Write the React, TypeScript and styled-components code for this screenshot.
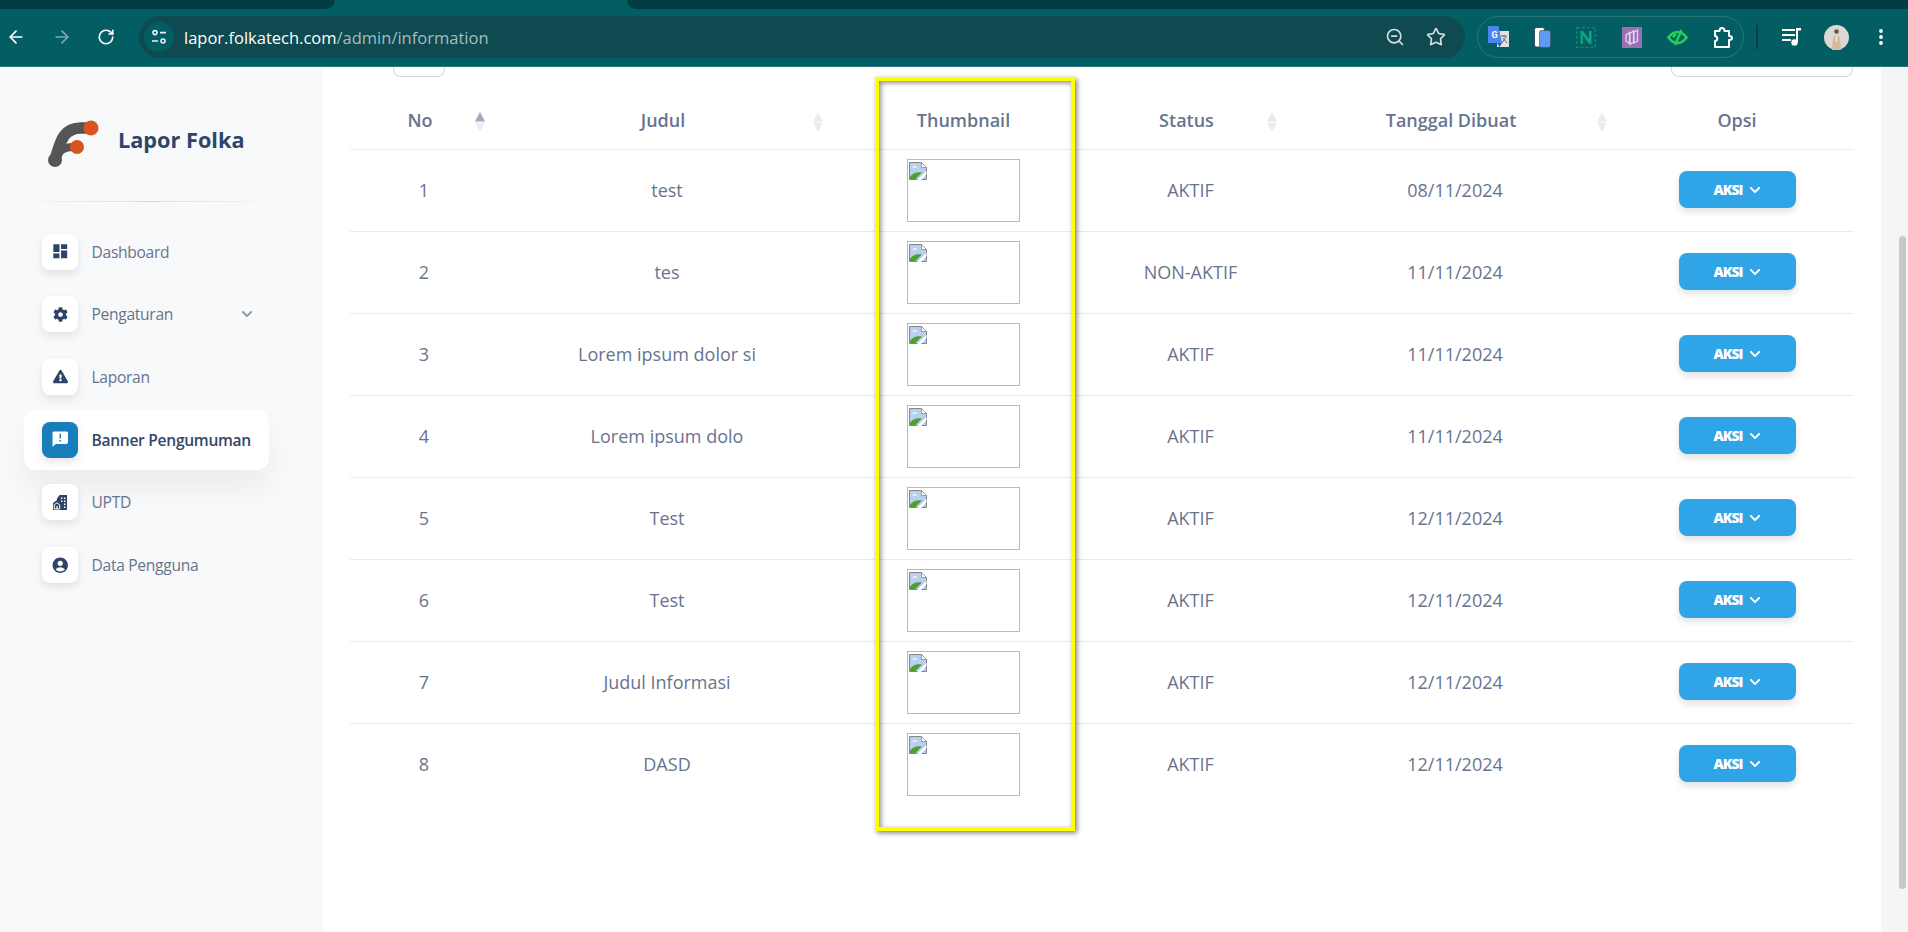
import styled, { createGlobalStyle } from 'styled-components';
import { ArrowLeft, ArrowRight, RotateCw, Star, ZoomOut } from 'lucide-react';
import { FaChevronDown, FaCog, FaExclamationTriangle } from 'react-icons/fa';
import { MdAccountCircle, MdAnnouncement, MdDashboard } from 'react-icons/md';
import type { ReactNode } from 'react';

const GlobalStyle = createGlobalStyle`
  html, body {
    margin: 0;
    padding: 0;
    height: 100%;
    overflow: hidden;
    background: #f8f9fa;
    font-family: "Open Sans", "Noto Sans", sans-serif;
  }
`;

const rows = [
  { no: 1, title: 'test', status: 'AKTIF', date: '08/11/2024' },
  { no: 2, title: 'tes', status: 'NON-AKTIF', date: '11/11/2024' },
  { no: 3, title: 'Lorem ipsum dolor si', status: 'AKTIF', date: '11/11/2024' },
  { no: 4, title: 'Lorem ipsum dolo', status: 'AKTIF', date: '11/11/2024' },
  { no: 5, title: 'Test', status: 'AKTIF', date: '12/11/2024' },
  { no: 6, title: 'Test', status: 'AKTIF', date: '12/11/2024' },
  { no: 7, title: 'Judul Informasi', status: 'AKTIF', date: '12/11/2024' },
  { no: 8, title: 'DASD', status: 'AKTIF', date: '12/11/2024' },
];

function BuildingIcon() {
  return (
    <svg width="14" height="15" viewBox="0 0 14 15">
      <path d="M4 3.500L6.500 0H14v15H0V8l4-3z" fill="currentColor" />
      <path d="M1.300 14v-4.200l2.700-2 2.700 2V14z" fill="currentColor" stroke="#fff" strokeWidth="1" />
      <path d="M3.400 11h1.300v3H3.400z" fill="#fff" />
      <path d="M8 2.500h1.400v1.400H8zM11 2.500h1.400v1.400H11zM8 5.500h1.400v1.400H8zM11 5.500h1.400v1.400H11zM11 8.500h1.400v1.400H11zM11 11.500h1.400v1.400H11z" fill="#fff" />
    </svg>
  );
}

const navItems: { label: string; icon: ReactNode; active?: boolean; caret?: boolean }[] = [
  { label: 'Dashboard', icon: <MdDashboard size={18.5} /> },
  { label: 'Pengaturan', icon: <FaCog size={15} />, caret: true },
  { label: 'Laporan', icon: <FaExclamationTriangle size={15} /> },
  { label: 'Banner Pengumuman', icon: <MdAnnouncement size={18.5} />, active: true },
  { label: 'UPTD', icon: <BuildingIcon /> },
  { label: 'Data Pengguna', icon: <MdAccountCircle size={18.5} /> },
];

function TuneIcon() {
  return (
    <svg width="16" height="16" viewBox="0 0 16 16" fill="none" stroke="#e8f3f3" strokeWidth="1.6">
      <circle cx="4" cy="3.600" r="2" />
      <path d="M9 3.600h6M1 12h6" />
      <circle cx="12" cy="12" r="2" />
    </svg>
  );
}

function TranslateIcon() {
  return (
    <svg width="21" height="22" viewBox="0 0 21 22">
      <rect x="9" y="5" width="12" height="16" fill="#dfe3e3" />
      <path d="M13 10h6M16 9v2M14 17l4-6M15 12l4 5" stroke="#666" strokeWidth="1" fill="none" />
      <path d="M0 0h10.500l3.500 17H0z" fill="#4a86ee" />
      <path d="M9 17h5l-2.500 4z" fill="#2c5fc0" />
      <GlyphG x="6.500" y="11.500" textAnchor="middle">
        G
      </GlyphG>
    </svg>
  );
}

function PhonesIcon() {
  return (
    <svg width="17" height="21" viewBox="0 0 17 21">
      <rect x="0.500" y="0.500" width="10" height="19.500" rx="2" fill="#fff" stroke="#3a4a5c" />
      <rect x="5.500" y="3.500" width="11" height="17" rx="2" fill="#5c9cf5" stroke="#3a4a5c" strokeWidth="0.600" />
    </svg>
  );
}

function NotionIcon() {
  return (
    <svg width="20" height="21" viewBox="0 0 20 21">
      <rect x="0.700" y="0.700" width="18.600" height="19.600" fill="none" stroke="#0d8a77" strokeWidth="1.300" strokeDasharray="3 2" />
      <path d="M4.500 17V4h2.600l5.900 8V4H15.500v13h-2.400L7 8.500V17z" fill="#10a27f" />
    </svg>
  );
}

function StackIcon() {
  return (
    <svg width="20" height="21" viewBox="0 0 20 21">
      <rect width="20" height="21" fill="#9a6fb4" />
      <path d="M4 8l3.500-2.500v11L4 14zM8 6.500l3.500-2.500v11L8 17.500zM12 5l3.500-2v11L12 16z" fill="none" stroke="#e5d6ee" strokeWidth="1.300" />
    </svg>
  );
}

function EyeOffIcon() {
  return (
    <svg width="21" height="17" viewBox="0 0 21 17" fill="none" stroke="#27cc5e" strokeWidth="2.600">
      <path d="M1.500 8.500c2.500-3.500 5.500-5.500 9-5.500s6.500 2 9 5.500c-2.500 3.500-5.500 5.500-9 5.500s-6.500-2-9-5.500z" />
      <path d="M14.500 1L8 16" />
      <path d="M6.500 8.500c0-2 1.500-3 3-3" />
    </svg>
  );
}

function PuzzleIcon() {
  return (
    <svg width="21" height="23" viewBox="0 0 21 23" fill="none" stroke="#fff" strokeWidth="2" strokeLinejoin="round">
      <path d="M2 5h4.500c0-4 5-4 5 0H16v5c4 0 4 4 0 4v7H2v-6c3 0 3-5 0-5z" />
    </svg>
  );
}

function QueueIcon() {
  return (
    <svg width="20" height="20" viewBox="0 0 20 20" fill="#fff">
      <path d="M0 2h13v2H0zM0 7h13v2H0zM0 12h9v2H0z" />
      <path d="M14 1h5v2.400h-3V15h-2z" />
      <circle cx="12.500" cy="15.500" r="3.200" />
    </svg>
  );
}

function AvatarImage() {
  return (
    <svg width="25" height="25" viewBox="0 0 25 25">
      <circle cx="12.500" cy="12.500" r="12.500" fill="#dcd9d5" />
      <path d="M8 25l1-13 3.500-2 3.500 2 1 13z" fill="#d4bc9c" />
      <circle cx="12.500" cy="6.500" r="2.300" fill="#6a5142" />
      <path d="M11.800 10.500h1.400v6h-1.400z" fill="#f3ede5" />
    </svg>
  );
}

function Dots() {
  return (
    <svg width="4" height="16" viewBox="0 0 4 16" fill="#fff">
      <circle cx="2" cy="2" r="1.900" />
      <circle cx="2" cy="8" r="1.900" />
      <circle cx="2" cy="14" r="1.900" />
    </svg>
  );
}

function FolkaLogo() {
  return (
    <svg width="56" height="52" viewBox="0 0 56 52" fill="none">
      <path d="M10 42C15 26 17 10 36 10h9" stroke="#555555" strokeWidth="11.500" strokeLinecap="round" />
      <path d="M14 35c3-5 8-6 17-6" stroke="#555555" strokeWidth="8" />
      <circle cx="10" cy="42" r="7" fill="#555555" />
      <circle cx="46" cy="10" r="7.500" fill="#d9541e" />
      <circle cx="32" cy="29" r="7" fill="#d9541e" />
    </svg>
  );
}

function BrokenImageIcon() {
  return (
    <svg width="18" height="18" viewBox="0 0 18 18">
      <path d="M.5.5h12l5 5v12H.5z" fill="#b9cff0" stroke="#858585" />
      <path d="M12.500.5v5h5z" fill="#fff" stroke="#9a9a9a" />
      <path d="M3 5.500c1-1.800 4.500-1.800 5.500 0z" fill="#fff" />
      <path d="M1 17v-2C3 11 8 9.500 13 10.500L6.500 17z" fill="#4f9f2c" />
      <path d="M8 18L17.500 9v3L12 18z" fill="#fff" />
    </svg>
  );
}

function SortIcon({ active }: { active?: boolean }) {
  return (
    <SortMark width="10" height="20" viewBox="0 0 10 20">
      <path d="M5 0l5 9.500H0z" fill={active ? '#a3aabd' : '#e9ecef'} />
      <path d="M5 20L0 10.500h10z" fill="#e9ecef" />
    </SortMark>
  );
}

function App() {
  return (
    <>
      <GlobalStyle />
      <Page>
        <TabStrip>
          <TabEdge $width={335} $radius="0 0 12px 0" />
          <TabGap />
          <TabEdge $width={1281} $radius="0 0 0 12px" />
        </TabStrip>
        <Toolbar>
          <NavButtons>
            <ArrowLeft size={20} color="#ffffff" strokeWidth={2} />
            <ArrowRight size={20} color="#7ea9ac" strokeWidth={2} />
            <RotateCw size={18} color="#ffffff" strokeWidth={2.2} />
          </NavButtons>
          <AddressBar>
            <SiteInfo>
              <TuneIcon />
            </SiteInfo>
            <UrlText>
              lapor.folkatech.com<UrlPath>/admin/information</UrlPath>
            </UrlText>
            <AddressActions>
              <ZoomOut size={20} color="#d6dcdc" strokeWidth={2} />
              <Star size={20} color="#d6dcdc" strokeWidth={2} />
            </AddressActions>
          </AddressBar>
          <ExtensionPill>
            <TranslateIcon />
            <PhonesIcon />
            <NotionIcon />
            <StackIcon />
            <EyeOffIcon />
            <PuzzleIcon />
          </ExtensionPill>
          <ToolbarDivider />
          <ProfileGroup>
            <QueueIcon />
            <AvatarSlot>
              <AvatarImage />
            </AvatarSlot>
            <Dots />
          </ProfileGroup>
        </Toolbar>
        <Body>
          <Sidebar>
            <Brand>
              <FolkaLogo />
              <BrandName>Lapor Folka</BrandName>
            </Brand>
            <SideDivider />
            <NavList>
              {navItems.map((item) => (
                <NavItem key={item.label} $active={item.active}>
                  <NavIcon $active={item.active}>{item.icon}</NavIcon>
                  <NavLabel $active={item.active}>{item.label}</NavLabel>
                  {item.caret && (
                    <Caret>
                      <FaChevronDown size={12} />
                    </Caret>
                  )}
                </NavItem>
              ))}
            </NavList>
          </Sidebar>
          <Main>
            <Controls>
              <LengthBox />
              <SearchBox />
            </Controls>
            <Table>
              <colgroup>
                <Col $width={148} />
                <Col $width={338} />
                <Col $width={255} />
                <Col $width={199} />
                <Col $width={330} />
                <Col $width={234} />
              </colgroup>
              <thead>
                <tr>
                  <HeadCell $sortable>
                    No
                    <SortIcon active />
                  </HeadCell>
                  <HeadCell $sortable>
                    Judul
                    <SortIcon />
                  </HeadCell>
                  <HeadCell>Thumbnail</HeadCell>
                  <HeadCell $sortable>
                    Status
                    <SortIcon />
                  </HeadCell>
                  <HeadCell $sortable>
                    Tanggal Dibuat
                    <SortIcon />
                  </HeadCell>
                  <HeadCell>Opsi</HeadCell>
                </tr>
              </thead>
              <tbody>
                {rows.map((row) => (
                  <BodyRow key={row.no}>
                    <Cell>{row.no}</Cell>
                    <Cell>{row.title}</Cell>
                    <Cell>
                      <Thumb>
                        <BrokenImageIcon />
                      </Thumb>
                    </Cell>
                    <Cell>{row.status}</Cell>
                    <Cell>{row.date}</Cell>
                    <Cell>
                      <ActionButton>
                        AKSI
                        <FaChevronDown size={12} />
                      </ActionButton>
                    </Cell>
                  </BodyRow>
                ))}
              </tbody>
            </Table>
            <Highlight />
          </Main>
          <Gutter>
            <ScrollThumb />
          </Gutter>
        </Body>
      </Page>
    </>
  );
}

export default App;

const Page = styled.div`
  width: 1908px;
  height: 932px;
  display: flex;
  flex-direction: column;
  overflow: hidden;
`;

const TabStrip = styled.div`
  height: 9px;
  display: flex;
  background: #035e64;
`;

const TabEdge = styled.div<{ $width: number; $radius: string }>`
  width: ${(p) => p.$width}px;
  background: #023c43;
  border-radius: ${(p) => p.$radius};
`;

const TabGap = styled.div`
  flex: 1;
`;

const Toolbar = styled.div`
  height: 58px;
  box-sizing: border-box;
  display: flex;
  align-items: center;
  background: #035e64;
  border-bottom: 1px solid #2c777c;
  padding-bottom: 1px;
`;

const NavButtons = styled.div`
  width: 139px;
  box-sizing: border-box;
  padding-left: 6px;
  padding-right: 24px;
  display: flex;
  align-items: center;
  justify-content: space-between;
`;

const AddressBar = styled.div`
  width: 1326px;
  height: 42px;
  border-radius: 21px;
  background: #0e4a50;
  display: flex;
  align-items: center;
  padding-left: 5px;
  box-sizing: border-box;
`;

const SiteInfo = styled.div`
  width: 30px;
  height: 30px;
  border-radius: 50%;
  background: #035e64;
  display: flex;
  align-items: center;
  justify-content: center;
`;

const UrlText = styled.div`
  margin-left: 10px;
  color: #ffffff;
  font-size: 16.5px;
  white-space: nowrap;
`;

const UrlPath = styled.span`
  color: #a7bcbe;
`;

const AddressActions = styled.div`
  margin-left: auto;
  padding-right: 19px;
  display: flex;
  align-items: center;
  gap: 21px;
`;

const ExtensionPill = styled.div`
  margin-left: 12px;
  width: 267px;
  height: 42px;
  box-sizing: border-box;
  border: 1px solid #2a7479;
  border-radius: 21px;
  padding: 0 9px 0 10px;
  display: flex;
  align-items: center;
  justify-content: space-between;
`;

const GlyphG = styled.text`
  font-family: "Roboto", sans-serif;
  font-size: 9px;
  font-weight: 700;
  fill: #ffffff;
`;

const ToolbarDivider = styled.div`
  width: 2px;
  height: 24px;
  margin-left: 12px;
  background: #0d3d43;
`;

const ProfileGroup = styled.div`
  margin-left: 24px;
  display: flex;
  align-items: center;
`;

const AvatarSlot = styled.span`
  display: flex;
  margin: 0 30px 0 22px;
`;

const Body = styled.div`
  height: 865px;
  display: flex;
`;

const Sidebar = styled.aside`
  width: 323px;
  flex-shrink: 0;
  background: #f8f9fa;
`;

const Brand = styled.div`
  height: 134px;
  box-sizing: border-box;
  padding: 51px 0 0 45px;
  display: flex;
  align-items: flex-start;
`;

const BrandName = styled.div`
  margin: 7px 0 0 17px;
  font-size: 21.7px;
  line-height: 30px;
  font-weight: 700;
  color: #2f4568;
  white-space: nowrap;
`;

const SideDivider = styled.div`
  height: 1px;
  margin: 0 40px 0 15px;
  background: linear-gradient(90deg, rgba(0, 0, 0, 0), rgba(0, 0, 0, 0.12), rgba(0, 0, 0, 0));
`;

const NavList = styled.nav`
  padding: 19.5px 0 0 24px;
  width: 245px;
  display: flex;
  flex-direction: column;
  gap: 2.7px;
`;

const NavItem = styled.div<{ $active?: boolean }>`
  height: 60px;
  box-sizing: border-box;
  padding-left: 18px;
  display: flex;
  align-items: center;
  border-radius: 12px;
  background: ${(p) => (p.$active ? '#ffffff' : 'transparent')};
  box-shadow: ${(p) => (p.$active ? '0 20px 27px rgba(0, 0, 0, 0.05)' : 'none')};
`;

const NavIcon = styled.div<{ $active?: boolean }>`
  width: 36px;
  height: 36px;
  flex-shrink: 0;
  border-radius: 8px;
  display: flex;
  align-items: center;
  justify-content: center;
  background: ${(p) => (p.$active ? '#1a7dbb' : '#ffffff')};
  color: ${(p) => (p.$active ? '#ffffff' : '#2f4568')};
  box-shadow: 0 4px 8px rgba(20, 20, 20, 0.1);
`;

const NavLabel = styled.span<{ $active?: boolean }>`
  margin-left: 13.5px;
  font-size: 15.6px;
  letter-spacing: -0.3px;
  white-space: nowrap;
  font-weight: ${(p) => (p.$active ? 600 : 400)};
  color: ${(p) => (p.$active ? '#344767' : '#67748e')};
`;

const Caret = styled.span`
  margin-left: auto;
  margin-right: 16px;
  display: flex;
  color: #8a94ab;
`;

const Main = styled.main`
  position: relative;
  width: 1558px;
  box-sizing: border-box;
  padding: 0 27px;
  background: #ffffff;
`;

const Controls = styled.div`
  height: 10px;
  display: flex;
  justify-content: space-between;
  padding: 0 1px 0 43px;
`;

const LengthBox = styled.div`
  width: 52px;
  box-sizing: border-box;
  border: 1px solid #d2d6da;
  border-top: 0;
  border-radius: 0 0 8px 8px;
`;

const SearchBox = styled.div`
  width: 182px;
  box-sizing: border-box;
  border: 1px solid #d2d6da;
  border-top: 0;
  border-radius: 0 0 8px 8px;
`;

const Table = styled.table`
  width: 1504px;
  table-layout: fixed;
  border-collapse: separate;
  border-spacing: 0;
`;

const Col = styled.col<{ $width: number }>`
  width: ${(p) => p.$width}px;
`;

const HeadCell = styled.th<{ $sortable?: boolean }>`
  position: relative;
  height: 73px;
  box-sizing: border-box;
  padding: 14px ${(p) => (p.$sortable ? '8px' : '0')} 0 0;
  text-align: center;
  vertical-align: middle;
  font-size: 18px;
  font-weight: 600;
  color: #67748e;
  border-bottom: 1px solid #e9ecef;
`;

const SortMark = styled.svg`
  position: absolute;
  right: 13px;
  top: 35px;
`;

const BodyRow = styled.tr`
  &:last-child td {
    border-bottom-color: transparent;
  }
`;

const Cell = styled.td`
  height: 82px;
  box-sizing: border-box;
  padding: 0 0 2px;
  text-align: center;
  vertical-align: middle;
  font-size: 18px;
  color: #67748e;
  border-bottom: 1px solid #e9ecef;
`;

const Thumb = styled.div`
  width: 113px;
  height: 63px;
  box-sizing: border-box;
  margin: 2px auto 0;
  border: 1px solid #b9b9b9;
  padding: 2px 1px;
  display: flex;
  align-items: flex-start;
  justify-content: flex-start;
  svg {
    display: block;
  }
`;

const ActionButton = styled.button`
  width: 117px;
  height: 37px;
  margin: 0 auto;
  display: flex;
  align-items: center;
  justify-content: center;
  gap: 6px;
  border: 0;
  border-radius: 8px;
  padding: 0;
  background: #2fa5e8;
  color: #ffffff;
  font-family: inherit;
  font-size: 14px;
  font-weight: 800;
  letter-spacing: -0.9px;
  box-shadow: 0 4px 7px rgba(20, 20, 20, 0.12);
`;

const Highlight = styled.div`
  position: absolute;
  left: 552px;
  top: 10px;
  width: 200px;
  height: 754px;
  box-sizing: border-box;
  border: 4px solid #ffff00;
  box-shadow: 2px 2px 5px rgba(0, 0, 0, 0.5), inset 2px 2px 5px rgba(0, 0, 0, 0.45);
  pointer-events: none;
`;

const Gutter = styled.div`
  flex: 1;
  background: #f4f5f7;
  padding: 169px 0 0 18px;
`;

const ScrollThumb = styled.div`
  width: 7px;
  height: 653px;
  border-radius: 4px;
  background: #c8c8c8;
`;
